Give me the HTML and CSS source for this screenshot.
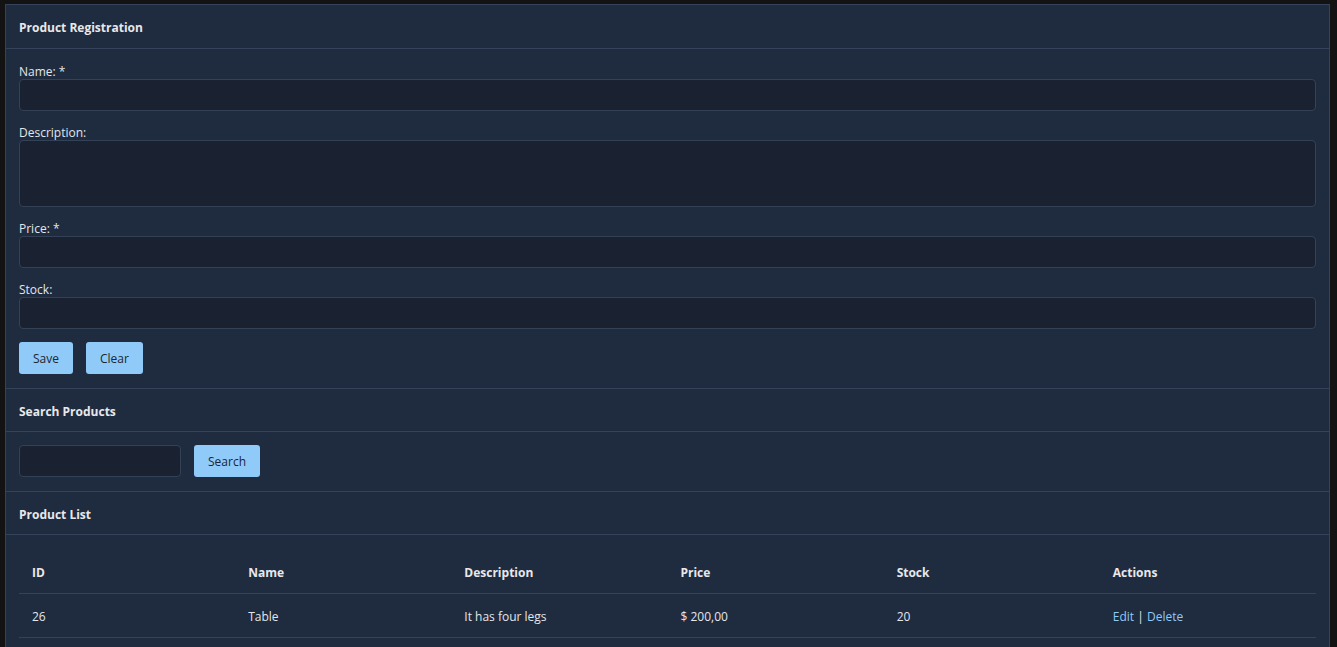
FILE: index.html
```html
<!DOCTYPE html>
<html lang="en">

<head>
    <meta charset="UTF-8">
    <meta name="viewport" content="width=device-width, initial-scale=1.0">
    <title>Products</title>
    <link rel="stylesheet" href="styles.css">
</head>

<body>
    <div class="container">
        <section class="panel">
            <div class="panel-header">Product Registration</div>
            <form class="panel-body form-body">
                <div class="field">
                    <label for="name">Name: *</label>
                    <input id="name" type="text">
                </div>
                <div class="field">
                    <label for="description">Description:</label>
                    <textarea id="description"></textarea>
                </div>
                <div class="field">
                    <label for="price">Price: *</label>
                    <input id="price" type="text">
                </div>
                <div class="field">
                    <label for="stock">Stock:</label>
                    <input id="stock" type="text">
                </div>
                <div class="buttons">
                    <button type="button" class="btn">Save</button>
                    <button type="button" class="btn">Clear</button>
                </div>
            </form>
        </section>

        <section class="panel">
            <div class="panel-header">Search Products</div>
            <div class="panel-body search-row">
                <input id="search" type="text">
                <button type="button" class="btn">Search</button>
            </div>
        </section>

        <section class="panel">
            <div class="panel-header">Product List</div>
            <div class="panel-body">
                <table class="products">
                    <thead>
                        <tr>
                            <th>ID</th>
                            <th>Name</th>
                            <th>Description</th>
                            <th>Price</th>
                            <th>Stock</th>
                            <th>Actions</th>
                        </tr>
                    </thead>
                    <tbody>
                        <tr>
                            <td>26</td>
                            <td>Table</td>
                            <td>It has four legs</td>
                            <td>$ 200,00</td>
                            <td>20</td>
                            <td><a href="#">Edit</a> | <a href="#">Delete</a></td>
                        </tr>
                    </tbody>
                </table>
            </div>
        </section>
    </div>
</body>

</html>
```

FILE: styles.css
```css
* {
    box-sizing: border-box;
    margin: 0;
    padding: 0;
}

body {
    background: #131313;
    color: #e4e6ea;
    font-family: "Open Sans", "Noto Sans", Arial, sans-serif;
    font-size: 12px;
}

.container {
    padding: 4px 7px 0 5px;
}

.panel {
    background: #1f2b3f;
    border: 1px solid #34435a;
    border-top: none;
}

.panel:first-child {
    border-top: 1px solid #34435a;
}

.panel-header {
    height: 44px;
    padding: 1px 13px 0 13px;
    display: flex;
    align-items: center;
    font-weight: 700;
    font-size: 12px;
    color: #e8e8ea;
    border-bottom: 1px solid #34435a;
}

.panel + .panel .panel-header {
    height: 43px;
    padding-top: 2px;
}

.panel-body {
    padding: 13px 13px 14px 13px;
}

.field {
    display: flex;
    flex-direction: column;
    margin-bottom: 12px;
}

.field label {
    height: 17px;
    line-height: 20px;
}

input,
textarea {
    background: #1a2231;
    border: 1px solid #344257;
    border-radius: 4px;
    color: #e4e6ea;
    font: inherit;
    height: 32px;
    padding: 4px 8px;
    outline: none;
    resize: none;
}

textarea {
    height: 67px;
}

.buttons {
    display: flex;
    gap: 13px;
    padding-top: 1px;
}

.btn {
    background: #90caf9;
    color: #1b2535;
    border: none;
    border-radius: 3px;
    height: 32px;
    padding: 0 14px;
    font: inherit;
    cursor: pointer;
}

.search-row {
    display: flex;
    gap: 13px;
}

#search {
    width: 162px;
}

.products {
    width: 100%;
    border-collapse: collapse;
    table-layout: fixed;
    margin-top: 4px;
}

.products th,
.products td {
    text-align: left;
    padding: 0 13px;
    height: 44px;
    border-bottom: 1px solid #34435a;
}

.products td {
    padding-top: 2px;
}

.products th {
    height: 41px;
    font-weight: 700;
    color: #e8e8ea;
}

.products a {
    color: #90caf9;
    text-decoration: none;
}
```
